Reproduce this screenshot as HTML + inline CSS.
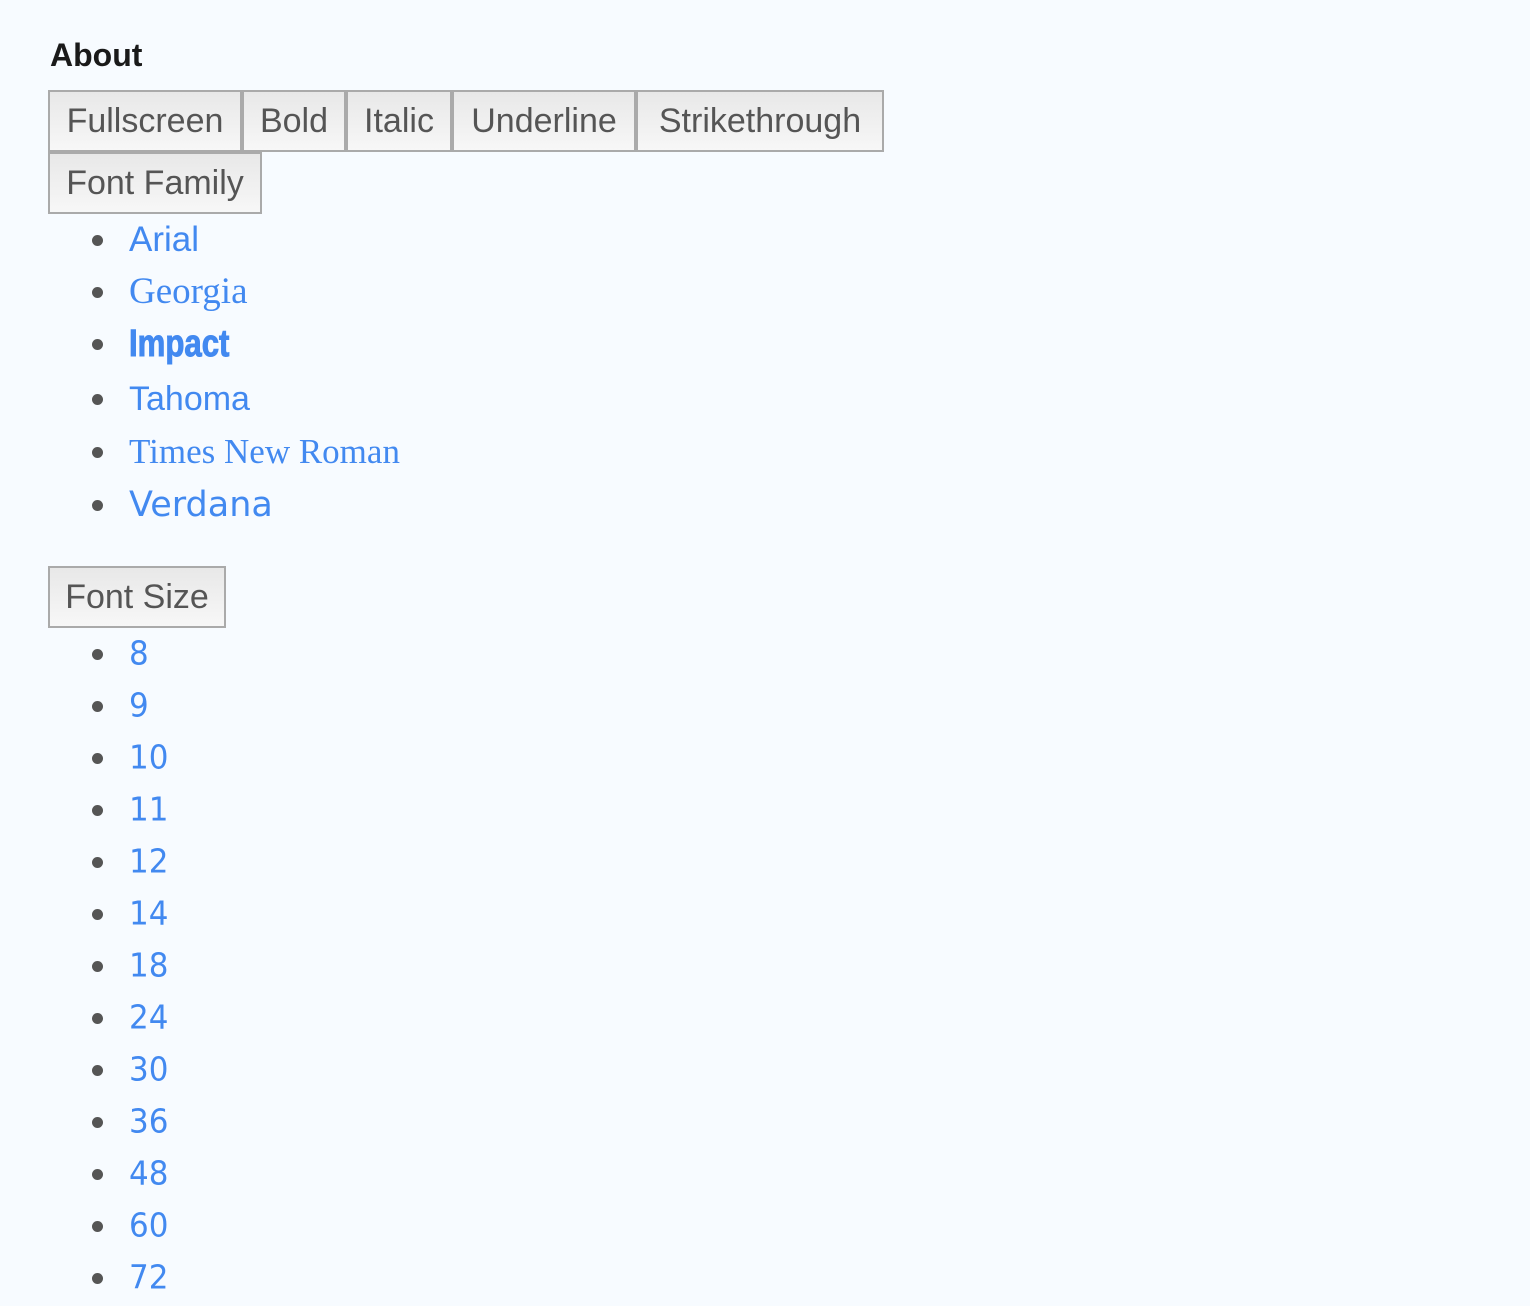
<!DOCTYPE html>
<html><head><meta charset="utf-8"><style>
body{margin:0;background:#f7fbff;font-family:"Liberation Sans",sans-serif;width:1530px;height:1270px;overflow:hidden;position:relative}
.h{position:absolute;left:50px;top:37px;font-weight:bold;font-size:32px;color:#1a1a1a}
.b{position:absolute;height:58px;border:2px solid #aaa;background:linear-gradient(#e8e8e8,#f7f7f7);color:#555;font-size:34px;line-height:58px;text-align:center;box-sizing:content-box}
.li{position:absolute;left:0;height:52px;width:800px}
.li i{position:absolute;left:92px;top:21px;width:11px;height:11px;border-radius:50%;background:#555}
.li span{position:absolute;left:129px;top:0;line-height:52px;color:#4289f0;white-space:nowrap}
.n span{font-family:"DejaVu Sans",sans-serif;font-size:31px;display:inline-block;transform:scaleY(1.06)}
</style></head><body>
<div class="h">About</div>
<div class="b" style="left:48px;top:90px;width:190px">Fullscreen</div>
<div class="b" style="left:242px;top:90px;width:100px">Bold</div>
<div class="b" style="left:346px;top:90px;width:102px">Italic</div>
<div class="b" style="left:452px;top:90px;width:180px">Underline</div>
<div class="b" style="left:636px;top:90px;width:244px">Strikethrough</div>
<div class="b" style="left:48px;top:152px;width:210px">Font Family</div>

<div class="li" style="top:214px"><i></i><span style="font-size:35px">Arial</span></div>
<div class="li" style="top:266px"><i></i><span style="font-family:'Liberation Serif',serif;font-size:37px">Georgia</span></div>
<div class="li" style="top:318px"><i></i><span style="font-size:38px;font-weight:bold;display:inline-block;transform:scaleX(.82);transform-origin:left;-webkit-text-stroke:1px #4289f0">Impact</span></div>
<div class="li" style="top:373px"><i></i><span style="font-size:34px">Tahoma</span></div>
<div class="li" style="top:426px"><i></i><span style="font-family:'Liberation Serif',serif;font-size:35px">Times New Roman</span></div>
<div class="li" style="top:479px"><i></i><span style="font-family:'DejaVu Sans',sans-serif;font-size:35px">Verdana</span></div>

<div class="b" style="left:48px;top:566px;width:174px">Font Size</div>
<div class="li n" style="top:628px"><i></i><span>8</span></div>
<div class="li n" style="top:680px"><i></i><span>9</span></div>
<div class="li n" style="top:732px"><i></i><span>10</span></div>
<div class="li n" style="top:784px"><i></i><span>11</span></div>
<div class="li n" style="top:836px"><i></i><span>12</span></div>
<div class="li n" style="top:888px"><i></i><span>14</span></div>
<div class="li n" style="top:940px"><i></i><span>18</span></div>
<div class="li n" style="top:992px"><i></i><span>24</span></div>
<div class="li n" style="top:1044px"><i></i><span>30</span></div>
<div class="li n" style="top:1096px"><i></i><span>36</span></div>
<div class="li n" style="top:1148px"><i></i><span>48</span></div>
<div class="li n" style="top:1200px"><i></i><span>60</span></div>
<div class="li n" style="top:1252px"><i></i><span>72</span></div>
</body></html>
